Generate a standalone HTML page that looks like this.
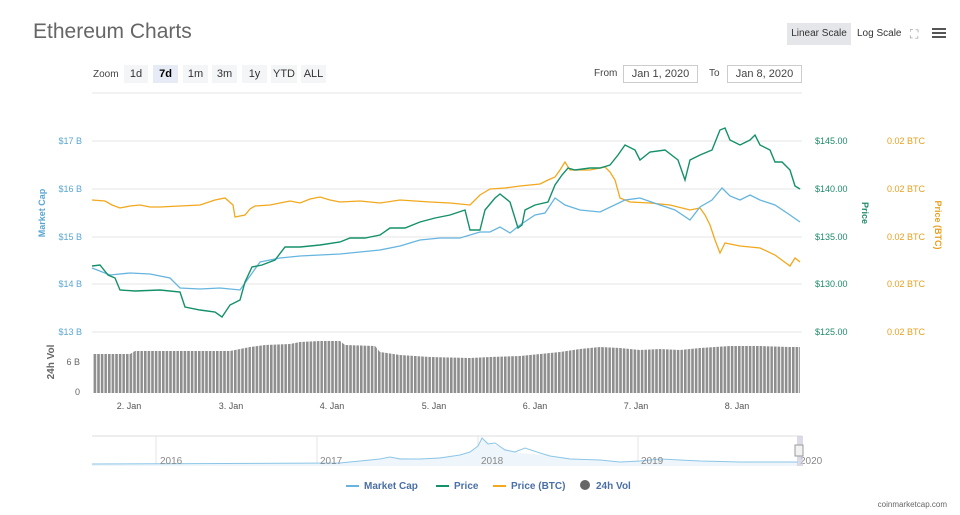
<!DOCTYPE html>
<html><head><meta charset="utf-8"><style>
body{margin:0;background:#fff;font-family:"Liberation Sans",sans-serif;width:960px;height:515px;overflow:hidden;position:relative}
.t{position:absolute;left:33px;top:20px;font-size:21px;color:#666}
.btn{position:absolute;top:65px;height:18px;font-size:11px;color:#333;background:#f4f5f7;text-align:center;line-height:18px}
.inp{position:absolute;top:65px;height:16px;border:1px solid #ccc;font-size:11px;color:#444;text-align:center;line-height:16px;width:73px}
</style></head><body>
<div class="t">Ethereum Charts</div>
<div style="position:absolute;left:787px;top:23px;width:64px;height:22px;background:#e4e6ea;font-size:10px;color:#333;line-height:22px;text-align:center">Linear Scale</div>
<div style="position:absolute;left:857px;top:23px;font-size:10px;color:#333;line-height:22px">Log Scale</div>
<div style="position:absolute;left:910px;top:27px;font-size:12px;color:#999">⛶</div>
<div style="position:absolute;left:932px;top:28px;width:14px;height:2px;background:#555;box-shadow:0 4px 0 #555,0 8px 0 #555"></div>
<div style="position:absolute;left:93px;top:69px;font-size:10px;color:#444">Zoom</div>
<div class="btn" style="left:124px;width:24px">1d</div>
<div class="btn" style="left:153px;width:25px;background:#e6ebf5;font-weight:bold;color:#000">7d</div>
<div class="btn" style="left:183px;width:25px">1m</div>
<div class="btn" style="left:212px;width:25px">3m</div>
<div class="btn" style="left:242px;width:25px">1y</div>
<div class="btn" style="left:271px;width:26px">YTD</div>
<div class="btn" style="left:301px;width:25px">ALL</div>
<div style="position:absolute;left:594px;top:68px;font-size:10px;color:#444">From</div>
<div class="inp" style="left:623px">Jan 1, 2020</div>
<div style="position:absolute;left:709px;top:68px;font-size:10px;color:#444">To</div>
<div class="inp" style="left:727px">Jan 8, 2020</div>
<svg width="960" height="515" style="position:absolute;left:0;top:0" font-family="Liberation Sans,sans-serif">
<defs><pattern id="vb" width="3.6" height="10" patternUnits="userSpaceOnUse"><rect width="2.6" height="10" fill="#8e8e8e"/></pattern></defs>
<line x1="92" y1="93" x2="802" y2="93" stroke="#e6e6e6"/>
<g stroke="#e6e6e6"><line x1="92" y1="141" x2="802" y2="141"/><line x1="92" y1="189" x2="802" y2="189"/><line x1="92" y1="237" x2="802" y2="237"/><line x1="92" y1="284" x2="802" y2="284"/><line x1="92" y1="332" x2="802" y2="332"/></g>
<g font-size="9" fill="#5aa6d3" text-anchor="end"><text x="82" y="144">$17 B</text><text x="82" y="192">$16 B</text><text x="82" y="240">$15 B</text><text x="82" y="287">$14 B</text><text x="82" y="335">$13 B</text></g>
<g font-size="9" fill="#1e8a6a"><text x="815" y="144">$145.00</text><text x="815" y="192">$140.00</text><text x="815" y="240">$135.00</text><text x="815" y="287">$130.00</text><text x="815" y="335">$125.00</text></g>
<g font-size="9" fill="#e8a020"><text x="887" y="144">0.02 BTC</text><text x="887" y="192">0.02 BTC</text><text x="887" y="240">0.02 BTC</text><text x="887" y="287">0.02 BTC</text><text x="887" y="335">0.02 BTC</text></g>
<text transform="translate(45,213) rotate(-90)" font-size="9" font-weight="bold" fill="#5aa6d3" text-anchor="middle">Market Cap</text>
<text transform="translate(862,213) rotate(90)" font-size="9" font-weight="bold" fill="#1e8a6a" text-anchor="middle">Price</text>
<text transform="translate(935,225) rotate(90)" font-size="9" font-weight="bold" fill="#e8a020" text-anchor="middle">Price (BTC)</text>
<polyline fill="none" stroke="#f2a81d" stroke-width="1.3" points="92,200 105,201 112,205 120,208 130,206 140,205 150,207 160,207 180,206 200,205 215,200 225,198 233,205 235,217 245,215 250,209 255,206 270,205 280,203 290,201 300,203 310,199 320,197 330,200 340,202 360,201 380,203 400,200 430,202 450,203 470,205 480,195 490,189 505,188 520,186 540,184 548,180 555,177 560,170 565,162 570,170 590,170 605,167 610,172 615,180 620,198 630,202 650,203 670,205 690,210 700,208 705,215 710,225 715,240 720,253 725,243 740,246 760,248 775,255 790,266 795,258 800,262"/>
<polyline fill="none" stroke="#66b5df" stroke-width="1.3" points="92,268 110,275 130,273 150,274 170,278 180,288 200,289 220,288 240,290 250,276 260,262 280,258 300,256 320,255 340,254 360,252 380,250 400,246 420,240 440,238 460,238 480,232 490,232 500,227 510,233 520,225 535,215 545,213 555,198 565,205 580,210 600,212 625,200 640,198 660,205 675,210 690,220 700,207 712,200 722,188 730,196 740,200 750,195 760,200 775,205 790,215 800,222"/>
<polyline fill="none" stroke="#14906a" stroke-width="1.4" points="92,266 100,265 108,275 115,278 120,290 135,291 160,290 180,292 185,307 200,310 215,312 222,317 230,305 240,300 245,282 252,267 262,265 275,260 285,247 300,247 320,245 340,242 350,238 365,238 380,235 390,228 405,228 420,222 435,218 450,215 465,210 470,230 480,230 485,210 495,198 500,194 510,202 518,228 522,225 525,210 535,205 548,202 555,185 562,175 568,168 575,170 590,168 600,168 610,165 618,155 625,145 635,150 640,160 650,152 665,150 678,160 685,180 690,160 700,155 712,150 720,130 725,128 730,140 740,145 750,140 755,135 760,145 770,150 775,162 782,162 790,170 795,186 800,189"/>
<polygon fill="url(#vb)" points="93,393 93,354 130,354 135,351 190,351 230,351 240,349 250,347 265,345 290,344 300,342 320,341 340,341 345,345 375,346 380,352 400,355 430,357 470,358 490,357 520,356 540,354 560,352 580,349 600,347 620,348 640,350 660,349 680,350 700,348 730,346 760,346 790,347 800,347 800,393"/>
<text transform="translate(54,362) rotate(-90)" font-size="10" font-weight="bold" fill="#666" text-anchor="middle">24h Vol</text>
<g font-size="9" fill="#666" text-anchor="end"><text x="80" y="365">6 B</text><text x="80" y="395">0</text></g>
<g font-size="9" fill="#555" text-anchor="middle"><text x="129" y="409">2. Jan</text><text x="231" y="409">3. Jan</text><text x="332" y="409">4. Jan</text><text x="434" y="409">5. Jan</text><text x="535" y="409">6. Jan</text><text x="636" y="409">7. Jan</text><text x="737" y="409">8. Jan</text></g>
<line x1="92" y1="436" x2="802" y2="436" stroke="#ddd"/>
<g stroke="#e6e6e6"><line x1="156" y1="436" x2="156" y2="466"/><line x1="317" y1="436" x2="317" y2="466"/><line x1="478" y1="436" x2="478" y2="466"/><line x1="638" y1="436" x2="638" y2="466"/></g>
<polygon fill="#eef6fb" points="92,466 92,464 340,463 380,459 390,457 420,459 460,455 470,452 478,446 482,438 490,443 500,447 520,453 545,455 580,459 620,462 660,460 700,461 740,462 798,462 798,466"/>
<polyline fill="none" stroke="#8cc6e6" points="92,464 340,463 380,459 390,457 400,459 420,459 440,458 460,455 470,452 478,446 482,438 488,444 495,443 505,450 515,452 525,448 540,453 550,456 570,459 600,460 620,462 640,461 660,459 680,460 700,461 740,462 798,462"/>
<g font-size="10" fill="#888"><text x="160" y="464">2016</text><text x="320" y="464">2017</text><text x="481" y="464">2018</text><text x="641" y="464">2019</text><text x="800" y="464">2020</text></g>
<rect x="797" y="436" width="6" height="30" fill="#ccd" opacity=".7"/>
<rect x="795" y="445" width="8" height="11" fill="#f2f2f2" stroke="#999"/>
<g font-size="10" font-weight="bold" fill="#4a6fa5"><line x1="346" y1="486" x2="359" y2="486" stroke="#66b5df" stroke-width="2"/><text x="364" y="489">Market Cap</text>
<line x1="436" y1="486" x2="449" y2="486" stroke="#14906a" stroke-width="2"/><text x="454" y="489">Price</text>
<line x1="493" y1="486" x2="506" y2="486" stroke="#f2a81d" stroke-width="2"/><text x="511" y="489">Price (BTC)</text>
<circle cx="585" cy="485" r="5" fill="#666"/><text x="596" y="489">24h Vol</text></g>
<text x="947" y="507" font-size="8" fill="#666" text-anchor="end">coinmarketcap.com</text>
</svg>
</body></html>
